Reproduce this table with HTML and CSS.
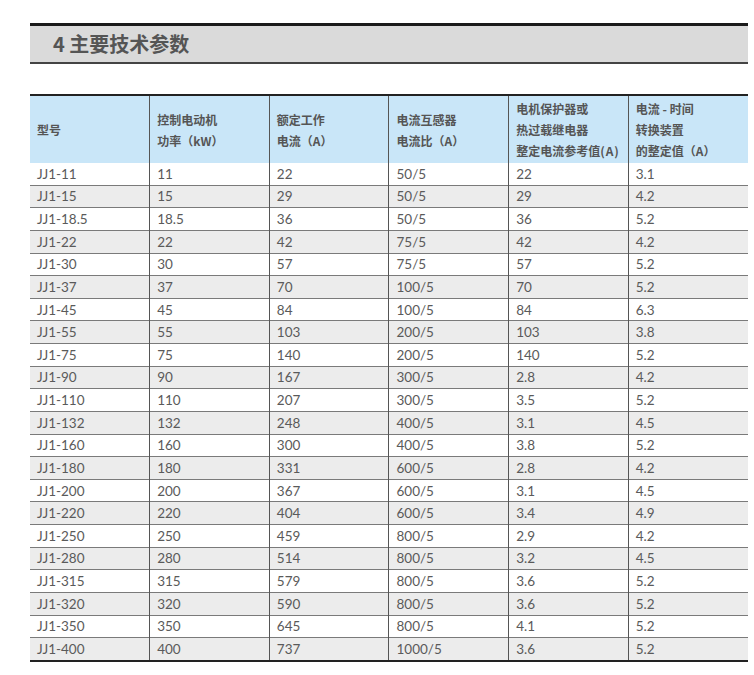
FILE: index.html
```html
<!DOCTYPE html>
<html lang="zh-CN">
<head>
<meta charset="utf-8">
<title>4 主要技术参数</title>
<link rel="stylesheet" href="styles.css">
</head>
<body>
<div class="page">
  <h2 class="section-title">4 主要技术参数</h2>
  <table class="spec">
    <thead>
      <tr>
        <th>型号</th>
        <th>控制电动机<br>功率（kW）</th>
        <th>额定工作<br>电流（A）</th>
        <th>电流互感器<br>电流比（A）</th>
        <th>电机保护器或<br>热过载继电器<br>整定电流参考值<span class="paren">(A)</span></th>
        <th>电流 - 时间<br>转换装置<br>的整定值（A）</th>
      </tr>
    </thead>
    <tbody>
      <tr><td>JJ1-11</td><td>11</td><td>22</td><td>50/5</td><td>22</td><td>3.1</td></tr>
      <tr><td>JJ1-15</td><td>15</td><td>29</td><td>50/5</td><td>29</td><td>4.2</td></tr>
      <tr><td>JJ1-18.5</td><td>18.5</td><td>36</td><td>50/5</td><td>36</td><td>5.2</td></tr>
      <tr><td>JJ1-22</td><td>22</td><td>42</td><td>75/5</td><td>42</td><td>4.2</td></tr>
      <tr><td>JJ1-30</td><td>30</td><td>57</td><td>75/5</td><td>57</td><td>5.2</td></tr>
      <tr><td>JJ1-37</td><td>37</td><td>70</td><td>100/5</td><td>70</td><td>5.2</td></tr>
      <tr><td>JJ1-45</td><td>45</td><td>84</td><td>100/5</td><td>84</td><td>6.3</td></tr>
      <tr><td>JJ1-55</td><td>55</td><td>103</td><td>200/5</td><td>103</td><td>3.8</td></tr>
      <tr><td>JJ1-75</td><td>75</td><td>140</td><td>200/5</td><td>140</td><td>5.2</td></tr>
      <tr><td>JJ1-90</td><td>90</td><td>167</td><td>300/5</td><td>2.8</td><td>4.2</td></tr>
      <tr><td>JJ1-110</td><td>110</td><td>207</td><td>300/5</td><td>3.5</td><td>5.2</td></tr>
      <tr><td>JJ1-132</td><td>132</td><td>248</td><td>400/5</td><td>3.1</td><td>4.5</td></tr>
      <tr><td>JJ1-160</td><td>160</td><td>300</td><td>400/5</td><td>3.8</td><td>5.2</td></tr>
      <tr><td>JJ1-180</td><td>180</td><td>331</td><td>600/5</td><td>2.8</td><td>4.2</td></tr>
      <tr><td>JJ1-200</td><td>200</td><td>367</td><td>600/5</td><td>3.1</td><td>4.5</td></tr>
      <tr><td>JJ1-220</td><td>220</td><td>404</td><td>600/5</td><td>3.4</td><td>4.9</td></tr>
      <tr><td>JJ1-250</td><td>250</td><td>459</td><td>800/5</td><td>2.9</td><td>4.2</td></tr>
      <tr><td>JJ1-280</td><td>280</td><td>514</td><td>800/5</td><td>3.2</td><td>4.5</td></tr>
      <tr><td>JJ1-315</td><td>315</td><td>579</td><td>800/5</td><td>3.6</td><td>5.2</td></tr>
      <tr><td>JJ1-320</td><td>320</td><td>590</td><td>800/5</td><td>3.6</td><td>5.2</td></tr>
      <tr><td>JJ1-350</td><td>350</td><td>645</td><td>800/5</td><td>4.1</td><td>5.2</td></tr>
      <tr><td>JJ1-400</td><td>400</td><td>737</td><td>1000/5</td><td>3.6</td><td>5.2</td></tr>
    </tbody>
  </table>
</div>
</body>
</html>
```
FILE: styles.css
```css
html, body {
  margin: 0;
  padding: 0;
  background: #ffffff;
}

.page {
  padding: 23px 6px 0 30px;
  width: 718px;
  font-family: Lato, "Noto Sans CJK SC", sans-serif;
  color: #555555;
}

.section-title {
  margin: 0;
  height: 36px;
  box-sizing: content-box;
  border-top: 3px solid #1a1a1a;
  border-bottom: 2px solid #444444;
  background: #dadada;
  padding-left: 23px;
  font-family: "Noto Sans CJK SC", sans-serif;
  font-size: 20px;
  font-weight: 700;
  line-height: 36px;
  color: #555555;
}

.spec {
  margin-top: 30px;
  width: 718px;
  border-collapse: collapse;
  table-layout: fixed;
  border-top: 2px solid #222222;
  border-bottom: 2px solid #222222;
}

.spec th {
  background: #c9e6f8;
  height: 67px;
  padding: 0 2px 0 7px;
  text-align: left;
  vertical-align: middle;
  font-family: "Noto Sans CJK SC", sans-serif;
  font-size: 12px;
  font-weight: 700;
  line-height: 21px;
  color: #555555;
  border-left: 1px solid #555555;
  white-space: nowrap;
}

.spec th .paren {
  letter-spacing: 1px;
}

.spec td {
  height: 21.63px;
  padding: 0 7px;
  font-size: 13.5px;
  line-height: 18px;
  color: #5a5a5a;
  border-top: 1px solid #7a7a7a;
  border-left: 1px solid #555555;
  vertical-align: middle;
}

.spec th:first-child,
.spec td:first-child {
  border-left: none;
}

.spec tbody tr:first-child td {
  border-top: none;
}

.spec tbody tr:nth-child(even) td {
  background: #ececec;
}
```
